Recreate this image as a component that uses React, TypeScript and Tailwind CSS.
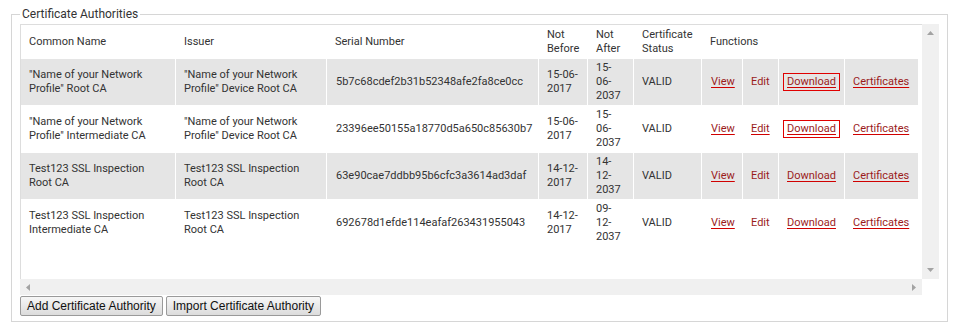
import React from "react";

type Row = {
  name: string[];
  issuer: string[];
  serial: string;
  before: string;
  after: string;
  status: string;
  editUnderline: boolean;
  boxed: boolean;
};

const rows: Row[] = [
  {
    name: ['"Name of your Network', 'Profile" Root CA'],
    issuer: ['"Name of your Network', 'Profile" Device Root CA'],
    serial: "5b7c68cdef2b31b52348afe2fa8ce0cc",
    before: "15-06-2017",
    after: "15-06-2037",
    status: "VALID",
    editUnderline: false,
    boxed: true,
  },
  {
    name: ['"Name of your Network', 'Profile" Intermediate CA'],
    issuer: ['"Name of your Network', 'Profile" Device Root CA'],
    serial: "23396ee50155a18770d5a650c85630b7",
    before: "15-06-2017",
    after: "15-06-2037",
    status: "VALID",
    editUnderline: true,
    boxed: true,
  },
  {
    name: ["Test123 SSL Inspection", "Root CA"],
    issuer: ["Test123 SSL Inspection", "Root CA"],
    serial: "63e90cae7ddbb95b6cfc3a3614ad3daf",
    before: "14-12-2017",
    after: "14-12-2037",
    status: "VALID",
    editUnderline: false,
    boxed: false,
  },
  {
    name: ["Test123 SSL Inspection", "Intermediate CA"],
    issuer: ["Test123 SSL Inspection", "Root CA"],
    serial: "692678d1efde114eafaf263431955043",
    before: "14-12-2017",
    after: "09-12-2037",
    status: "VALID",
    editUnderline: false,
    boxed: false,
  },
];

const td = "px-[8px] py-[2px] border-r border-b border-white align-middle text-left";
const link = "text-[#9b1c1c] underline decoration-[#d00000] underline-offset-[2px]";

function Tri({ dir }: { dir: "up" | "down" | "left" | "right" }) {
  const pts =
    dir === "up"
      ? "0,4 3.5,0 7,4"
      : dir === "down"
      ? "0,0 7,0 3.5,4"
      : dir === "left"
      ? "4,0 4,7 0,3.5"
      : "0,0 0,7 4,3.5";
  const w = dir === "up" || dir === "down" ? 7 : 4;
  const h = dir === "up" || dir === "down" ? 4 : 7;
  return (
    <svg width={w} height={h} viewBox={`0 0 ${w} ${h}`}>
      <polygon points={pts} fill="#a3a3a3" />
    </svg>
  );
}

export default function App() {
  return (
    <div className="w-[961px] h-[325px] bg-white overflow-hidden font-[Roboto,sans-serif] text-[#333]">
      <fieldset className="ml-[11px] mt-[7px] w-[937px] h-[315px] border border-[#d6d6d6] px-[8px] pt-[3px]">
        <legend className="px-[2px] text-[12px] leading-[14px] text-[#333]">Certificate Authorities</legend>
        <div className="flex">
          <div className="w-[902px] flex flex-col">
            <div className="h-[255px] border-t border-l border-[#dddddd] overflow-hidden">
              <table className="table-fixed border-separate border-spacing-0 w-[898px] text-[11px] leading-[14px] text-[#333]">
                <colgroup>
                  <col className="w-[155px]" />
                  <col className="w-[151px]" />
                  <col className="w-[212px]" />
                  <col className="w-[49px]" />
                  <col className="w-[46px]" />
                  <col className="w-[68px]" />
                  <col className="w-[41px]" />
                  <col className="w-[36px]" />
                  <col className="w-[66px]" />
                  <col className="w-[74px]" />
                </colgroup>
                <thead>
                  <tr className="h-[34px] bg-white">
                    <th className="px-[8px] font-normal text-left align-middle">Common Name</th>
                    <th className="px-[8px] font-normal text-left align-middle">Issuer</th>
                    <th className="px-[8px] font-normal text-left align-middle">Serial Number</th>
                    <th className="px-[8px] font-normal text-left align-middle">Not Before</th>
                    <th className="px-[8px] font-normal text-left align-middle">Not After</th>
                    <th className="px-[8px] font-normal text-left align-middle">Certificate Status</th>
                    <th colSpan={4} className="px-[8px] font-normal text-left align-middle">Functions</th>
                  </tr>
                </thead>
                <tbody>
                  {rows.map((r, i) => (
                    <tr key={i} className={i % 2 === 0 ? "bg-[#e5e5e5]" : "bg-white"}>
                      <td className={td}>
                        {r.name[0]}
                        <br />
                        {r.name[1]}
                      </td>
                      <td className={td}>
                        {r.issuer[0]}
                        <br />
                        {r.issuer[1]}
                      </td>
                      <td className={td + " pl-[9px]"}>{r.serial}</td>
                      <td className={td}>{r.before}</td>
                      <td className={td}>{r.after}</td>
                      <td className={td}>{r.status}</td>
                      <td className={td + " pl-[9px]"}>
                        <a className={link}>View</a>
                      </td>
                      <td className={td}>
                        <a className={r.editUnderline ? link : "text-[#9b1c1c]"}>Edit</a>
                      </td>
                      <td className="pl-[4px] pr-0 py-[2px] border-r border-b border-white align-middle text-left">
                        <a
                          className={
                            "inline-block px-[3px] py-[1px] border " +
                            (r.boxed ? "border-[#e00000] " : "border-transparent ") +
                            link
                          }
                        >
                          Download
                        </a>
                      </td>
                      <td className={td}>
                        <a className={link}>Certificates</a>
                      </td>
                    </tr>
                  ))}
                </tbody>
              </table>
            </div>
            <div className="h-[16px] bg-[#f0f0f0] flex items-center justify-between px-[6px]">
              <Tri dir="left" />
              <Tri dir="right" />
            </div>
          </div>
          <div className="w-[17px] flex flex-col">
            <div className="h-[255px] bg-[#f0f0f0] flex flex-col items-center justify-between py-[7px]">
              <Tri dir="up" />
              <Tri dir="down" />
            </div>
            <div className="h-[16px] bg-white" />
          </div>
        </div>
        <div className="mt-[1px] flex gap-[3px] font-['Liberation_Sans',Arial,sans-serif] text-[12px] text-[#111]">
          <button className="h-[20px] px-[6px] border border-[#9a9a9a] rounded-[2px] bg-gradient-to-b from-[#f7f7f7] to-[#dcdcdc] leading-[18px]">
            Add Certificate Authority
          </button>
          <button className="h-[20px] px-[6px] border border-[#9a9a9a] rounded-[2px] bg-gradient-to-b from-[#f7f7f7] to-[#dcdcdc] leading-[18px]">
            Import Certificate Authority
          </button>
        </div>
      </fieldset>
    </div>
  );
}
